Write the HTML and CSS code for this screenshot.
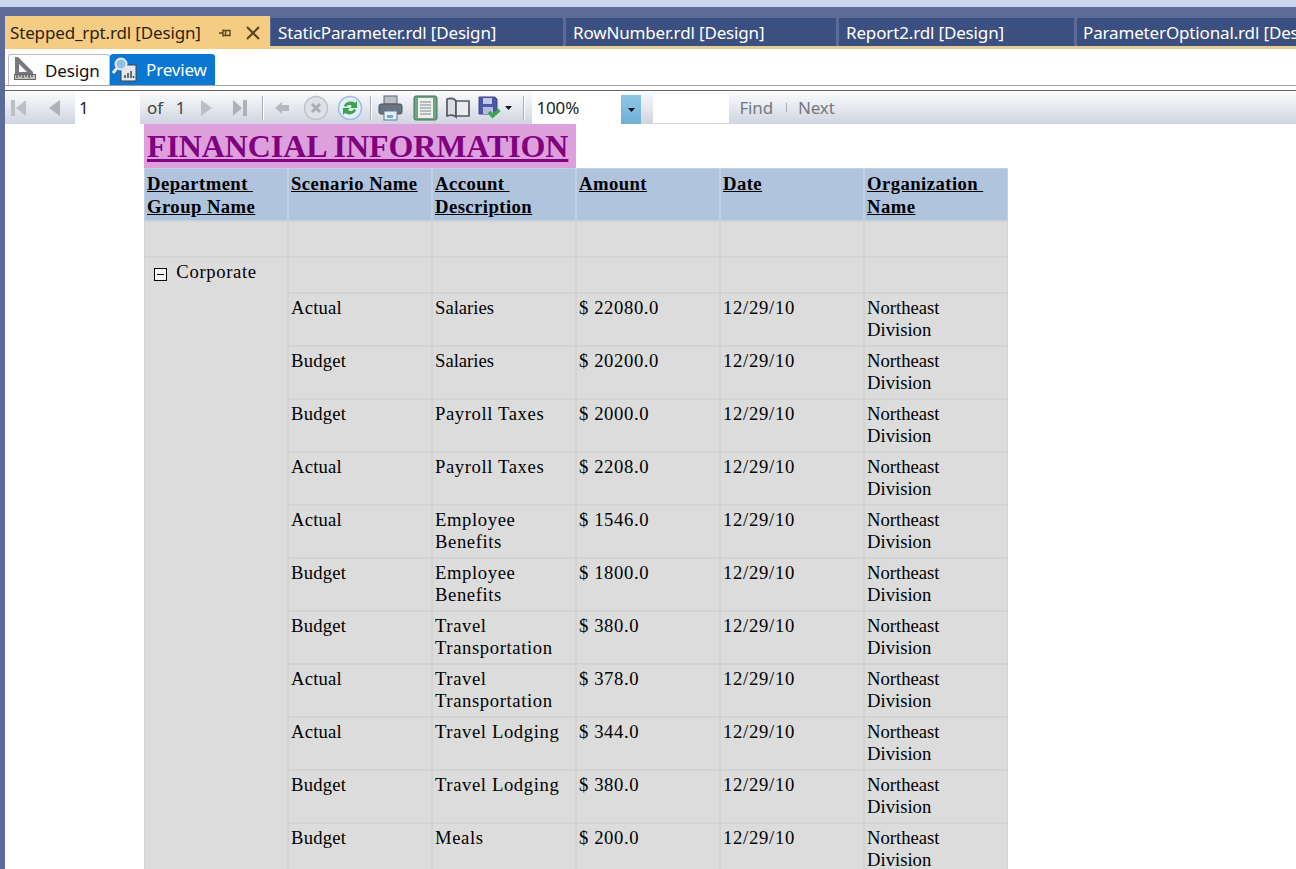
FILE: index.html
```html
<!DOCTYPE html>
<html lang="en">
<head>
  <meta charset="UTF-8">
  <title>Stepped_rpt.rdl [Design]</title>
  <link rel="stylesheet" href="styles.css">
</head>
<body>
  <div class="top-band"></div>
  <div class="window">
    <div class="tabstrip">
      <div class="doc-tab active">
        <span class="doc-name">Stepped_rpt.rdl [Design]</span>
        <svg class="pin" width="14" height="14" viewBox="0 0 14 14"><path d="M1 7h4M5 3.500v7M5 4.500h7v5H5M7.500 4.500v5" fill="none" stroke="#5b4416" stroke-width="1.400"/></svg>
        <svg class="close" width="16" height="16" viewBox="0 0 16 16"><path d="M2 2l12 12M14 2L2 14" fill="none" stroke="#5b4416" stroke-width="2"/></svg>
      </div>
      <div class="doc-tab w1">StaticParameter.rdl [Design]</div>
      <div class="doc-tab w2">RowNumber.rdl [Design]</div>
      <div class="doc-tab w3">Report2.rdl [Design]</div>
      <div class="doc-tab w4">ParameterOptional.rdl [Design]</div>
    </div>

    <div class="pane">
      <div class="view-tabs">
        <div class="view-tab design">
          <svg class="design-ico" width="24" height="25" viewBox="0 0 24 25"><path d="M2 1h3l15 15v3H2z" fill="#77797c"/><path d="M6 8l8 8H6z" fill="#fff"/><rect x="1.500" y="18.500" width="21" height="5" fill="#c4c4c0" stroke="#666"/><path d="M4 19v3M7 19v2M10 19v3M13 19v2M16 19v3M19 19v2" stroke="#333"/></svg>
          <span>Design</span>
        </div>
        <div class="view-tab preview">
          <svg width="26" height="26" viewBox="0 0 26 26"><rect x="9" y="8" width="15" height="16" fill="#e4e8ec" stroke="#39424e"/><path d="M13 21v-3M16 21v-5M19 21v-7M21.500 21v-2" stroke="#39424e" stroke-width="1.500"/><circle cx="9" cy="7" r="5.500" fill="#8fc0e6" stroke="#e8e8e8" stroke-width="2"/><path d="M5 11l-4 5" stroke="#e8e8e8" stroke-width="3"/></svg>
          <span>Preview</span>
        </div>
      </div>

      <div class="toolbar">
        <svg class="ico m-first" width="17" height="20" viewBox="0 0 17 20"><path d="M1 2h4v16H1zM16 2v16L6 10z" fill="#bcc0c6"/></svg>
        <svg class="ico m-prev" width="14" height="20" viewBox="0 0 14 20"><path d="M13 2v16L2 10z" fill="#aeb2b8"/></svg>
        <div class="field page-field">1</div>
        <span class="label of">of</span>
        <span class="label total">1</span>
        <svg class="ico m-next" width="13" height="20" viewBox="0 0 13 20"><path d="M1 2v16l11-8z" fill="#bcc0c6"/></svg>
        <svg class="ico m-last" width="16" height="20" viewBox="0 0 16 20"><path d="M1 2v16l9-8zM11 2h4v16h-4z" fill="#aeb2b8"/></svg>
        <i class="tool-sep s1"></i>
        <svg class="ico m-back" width="16" height="14" viewBox="0 0 16 14"><path d="M8 1L1 7l7 6v-3h7V4H8z" fill="#b4b9c0"/></svg>
        <svg class="ico m-stop" width="26" height="26" viewBox="0 0 26 26"><circle cx="13" cy="13" r="11.500" fill="#dfe1e6" stroke="#c0c3c9" stroke-width="1.500"/><path d="M9 9l8 8M17 9l-8 8" stroke="#a8acb3" stroke-width="3"/></svg>
        <svg class="ico m-refresh" width="26" height="26" viewBox="0 0 26 26"><circle cx="13" cy="13" r="11.500" fill="#e2eefa" stroke="#9dbfe2" stroke-width="1.500"/><path d="M7 11c1-4 7-6 11-3l2-2v7h-7l2-2c-2-2-5-1-6 1z" fill="#3fa34c"/><path d="M19 15c-1 4-7 6-11 3l-2 2v-7h7l-2 2c2 2 5 1 6-1z" fill="#3fa34c"/></svg>
        <i class="tool-sep s2"></i>
        <svg class="ico m-print" width="25" height="26" viewBox="0 0 25 26"><rect x="6" y="1" width="13" height="8" fill="#b9bfc6" stroke="#5c6570"/><rect x="1" y="9" width="23" height="10" rx="2" fill="#69747f" stroke="#4b5560"/><rect x="6" y="16" width="13" height="9" fill="#e8edf1" stroke="#607a92"/><rect x="9" y="20" width="6" height="3" fill="#6aa8d8"/></svg>
        <svg class="ico m-layout" width="25" height="26" viewBox="0 0 25 26"><rect x="1" y="1" width="23" height="24" rx="2" fill="#6ea583" stroke="#47735a"/><rect x="5" y="3" width="15" height="20" fill="#eef1ef"/><path d="M7 7h11M7 10h11M7 13h11M7 16h11M7 19h11" stroke="#7a8791" stroke-width="1.200"/></svg>
        <svg class="ico m-book" width="25" height="24" viewBox="0 0 25 24"><path d="M11 5C9 2 5 2 2 3v17c3-1 7-1 9 1z" fill="#d9dce1" stroke="#555a62" stroke-width="1.700"/><path d="M11 5h13v15H11z" fill="#e9ebef" stroke="#555a62" stroke-width="1.700"/></svg>
        <svg class="ico m-save" width="23" height="24" viewBox="0 0 23 24"><path d="M1 1h16l2 2v15H1z" fill="#4a58a8" stroke="#3a4787"/><rect x="5" y="2" width="9" height="6" fill="#c3c9e4"/><rect x="5" y="11" width="10" height="7" fill="#b4bbdc"/><path d="M11 16l3.500 4 7-6" fill="none" stroke="#3aa757" stroke-width="3.500"/></svg>
        <svg class="ico m-caret" width="7" height="4" viewBox="0 0 7 4"><path d="M0 0h7L3.500 4z" fill="#111"/></svg>
        <i class="tool-sep s3"></i>
        <div class="field zoom-field">100%</div>
        <div class="zoom-btn"><svg width="7" height="4" viewBox="0 0 7 4"><path d="M0 0h7L3.500 4z" fill="#111"/></svg></div>
        <div class="zoom-gap"></div>
        <div class="field find-field"></div>
        <span class="label find">Find</span>
        <i class="find-sep"></i>
        <span class="label next">Next</span>
      </div>

      <div class="report">
        <div class="report-title"><span>FINANCIAL INFORMATION</span></div>
        <table class="grid">
          <thead>
            <tr>
              <th>Department&nbsp;<br>Group Name</th>
              <th>Scenario Name</th>
              <th>Account&nbsp;<br>Description</th>
              <th>Amount</th>
              <th>Date</th>
              <th>Organization&nbsp;<br>Name</th>
            </tr>
          </thead>
          <tbody>
            <tr class="blank"><td></td><td></td><td></td><td></td><td></td><td></td></tr>
            <tr class="blank">
              <td class="group" rowspan="13">
                <svg class="toggle" width="13" height="13" viewBox="0 0 13 13"><rect x="0.500" y="0.500" width="12" height="12" fill="#f4f4f4" stroke="#000"/><path d="M3 6.500h7" stroke="#000"/></svg>
                <span>Corporate</span>
              </td>
              <td></td><td></td><td></td><td></td><td></td>
            </tr>
            <tr><td>Actual</td><td class="plain">Salaries</td><td>$ 22080.0</td><td>12/29/10</td><td>Northeast Division</td></tr>
            <tr><td>Budget</td><td class="plain">Salaries</td><td>$ 20200.0</td><td>12/29/10</td><td>Northeast Division</td></tr>
            <tr><td>Budget</td><td>Payroll Taxes</td><td>$ 2000.0</td><td>12/29/10</td><td>Northeast Division</td></tr>
            <tr><td>Actual</td><td>Payroll Taxes</td><td>$ 2208.0</td><td>12/29/10</td><td>Northeast Division</td></tr>
            <tr><td>Actual</td><td>Employee Benefits</td><td>$ 1546.0</td><td>12/29/10</td><td>Northeast Division</td></tr>
            <tr><td>Budget</td><td>Employee Benefits</td><td>$ 1800.0</td><td>12/29/10</td><td>Northeast Division</td></tr>
            <tr><td>Budget</td><td>Travel Transportation</td><td>$ 380.0</td><td>12/29/10</td><td>Northeast Division</td></tr>
            <tr><td>Actual</td><td>Travel Transportation</td><td>$ 378.0</td><td>12/29/10</td><td>Northeast Division</td></tr>
            <tr><td>Actual</td><td>Travel Lodging</td><td>$ 344.0</td><td>12/29/10</td><td>Northeast Division</td></tr>
            <tr><td>Budget</td><td>Travel Lodging</td><td>$ 380.0</td><td>12/29/10</td><td>Northeast Division</td></tr>
            <tr><td>Budget</td><td>Meals</td><td>$ 200.0</td><td>12/29/10</td><td>Northeast Division</td></tr>
          </tbody>
        </table>
      </div>
    </div>
  </div>
</body>
</html>
```

FILE: styles.css
```css
html, body {
  height: 100%;
}
body {
  margin: 0;
  overflow: hidden;
  background: #fff;
  font-family: "Noto Sans", "Open Sans", sans-serif;
  letter-spacing: -0.15px;
  color: #111;
}
.top-band {
  height: 7px;
  background: #ccd5f0;
}
.window {
  background: #5d6b99;
  padding: 9px 0 0 5px;
  height: 862px;
  box-sizing: border-box;
}

/* document tabs */
.tabstrip {
  display: flex;
  align-items: flex-start;
  gap: 3px;
  height: 33px;
  overflow: hidden;
  box-shadow: inset 0 -3px 0 #e6cd94;
}
.doc-tab {
  flex: none;
  box-sizing: border-box;
  height: 28px;
  margin-top: 2px;
  padding-left: 7px;
  background: #3b4f81;
  color: #fff;
  font-size: 17px;
  line-height: 29px;
  white-space: nowrap;
  overflow: hidden;
}
.doc-tab.active {
  display: flex;
  align-items: center;
  width: 265px;
  height: 33px;
  margin: 0 -2px 0 0;
  padding-left: 5px;
  background: #f5cc84;
  color: #2e2310;
}
.doc-name {
  width: 208px;
}
.pin {
  margin-right: 13px;
}
.w1 { width: 292px; }
.w2 { width: 270px; }
.w3 { width: 235px; padding-left: 7px; }
.w4 { width: 300px; padding-left: 6px; }

/* design / preview */
.pane {
  background: #fff;
  height: 820px;
}
.view-tabs {
  display: flex;
  align-items: flex-end;
  height: 37px;
  padding-left: 3px;
  box-sizing: border-box;
  border-bottom: 1px solid #a0a0a0;
}
.view-tab {
  display: flex;
  align-items: center;
  box-sizing: border-box;
  height: 31px;
  font-size: 17px;
}
.design {
  width: 102px;
  padding-left: 4px;
  gap: 8px;
  border: 1px solid #b9bdc4;
  border-bottom: 0;
  border-radius: 3px 3px 0 0;
}
.design-ico {
  margin-bottom: 3px;
}
.preview {
  width: 105px;
  padding-left: 2px;
  gap: 8px;
  background: #0a78d2;
  color: #fff;
  border-radius: 3px 3px 0 0;
}

/* report toolbar */
.toolbar {
  display: flex;
  align-items: center;
  height: 34px;
  margin-top: 4px;
  border-top: 1px solid #666;
  background: linear-gradient(#fbfcfd, #cfd4e0);
  font-size: 17px;
  box-sizing: border-box;
}
.ico {
  flex: none;
}
.field {
  flex: none;
  align-self: stretch;
  background: #fff;
  color: #222;
  line-height: 33px;
}
.label {
  color: #444;
}
.m-first { margin-left: 5px; }
.m-prev { margin-left: 20px; }
.page-field { width: 65px; margin-left: 14px; padding-left: 4px; box-sizing: border-box; }
.of { margin-left: 7px; }
.total { margin-left: 13px; }
.m-next { margin-left: 15px; }
.m-last { margin-left: 19px; }
.tool-sep {
  flex: none;
  width: 1px;
  height: 24px;
  background: #a9adb6;
  box-shadow: 1px 0 0 #fff;
}
.s1 { margin-left: 14px; }
.m-back { margin-left: 11px; }
.m-stop { margin-left: 13px; }
.m-refresh { margin-left: 8px; }
.s2 { margin-left: 7px; }
.m-print { margin-left: 7px; }
.m-layout { margin-left: 10px; }
.m-book { margin-left: 7px; }
.m-save { margin-left: 8px; }
.m-caret { margin-left: 4px; }
.s3 { margin-left: 11px; }
.zoom-field { width: 89px; margin-left: 8px; padding-left: 4px; box-sizing: border-box; }
.zoom-btn {
  flex: none;
  display: flex;
  align-items: center;
  justify-content: center;
  align-self: stretch;
  width: 20px;
  margin-top: 4px;
  background: linear-gradient(#8cc6e6, #6fb0d8);
}
.zoom-gap {
  flex: none;
  width: 12px;
  align-self: stretch;
  margin-top: 4px;
  background: linear-gradient(#f4f5f8, #d0d4de);
}
.find-field { width: 76px; margin-top: 4px; margin-bottom: 1px; }
.find { margin-left: 10px; color: #75787f; }
.find-sep {
  flex: none;
  width: 1px;
  height: 9px;
  margin-left: 13px;
  background: #a9adb6;
}
.next { margin-left: 11px; color: #75787f; }

/* report body */
.report {
  padding-left: 139px;
  font-family: "Liberation Serif", serif;
  font-size: 18.67px;
  line-height: 22px;
  letter-spacing: 0;
  color: #000;
}
.report-title {
  width: 432px;
  height: 44px;
  box-sizing: border-box;
  padding: 3px 3px 0;
  background: #dda0dd;
  color: #800080;
  font-size: 32px;
  line-height: 38px;
  font-weight: bold;
  letter-spacing: -0.1px;
  text-decoration: underline;
  white-space: nowrap;
}
.grid {
  width: 864px;
  table-layout: fixed;
  border-collapse: separate;
  border-spacing: 0;
}
.grid th,
.grid td {
  box-sizing: border-box;
  height: 53px;
  padding: 3px 2px 0;
  vertical-align: top;
  text-align: left;
  background: #dcdcdc;
  border: 1px solid #d3d3d3;
}
.grid th {
  line-height: 23px;
  letter-spacing: 0.45px;
  background: #b0c4de;
  text-decoration: underline;
  border-color: #c3d0e2;
}
.grid .blank td {
  height: 36px;
}
.grid .group {
  white-space: nowrap;
  padding: 3px 0 0 9px;
  letter-spacing: 0.65px;
}
.grid td:nth-last-child(5) { letter-spacing: 0.2px; }
.grid td:nth-last-child(4) { letter-spacing: 0.6px; }
.grid td:nth-last-child(3) { letter-spacing: 0.6px; }
.grid td:nth-last-child(2) { letter-spacing: 0.7px; }
.grid td.plain { letter-spacing: 0; }
.toggle {
  vertical-align: -3px;
  margin-right: 4px;
}
```
